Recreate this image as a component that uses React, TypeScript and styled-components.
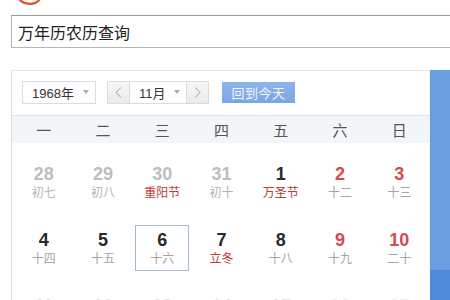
import React from 'react'
import styled, { createGlobalStyle } from 'styled-components'

const FONT = '"Liberation Sans", Arial, "Noto Sans CJK SC", sans-serif'
const RED = '#d9484c'
const FEST_RED = '#c0393b'

const GlobalStyle = createGlobalStyle`
  html, body {
    margin: 0;
    padding: 0;
    background: #fff;
    overflow: hidden;
  }
  body {
    font-family: ${FONT};
    color: #333;
  }
`

const Page = styled.div`
  width: 450px;
  height: 300px;
  overflow: hidden;
  padding-left: 11px;
  box-sizing: border-box;
`

const LogoBar = styled.div`
  height: 15px;
  padding-left: 4px;
  overflow: hidden;
`

const SearchBox = styled.div`
  width: 470px;
  height: 33px;
  box-sizing: border-box;
  border: 1px solid #b4b4b4;
  border-top-color: #999;
  display: flex;
  align-items: center;
  padding-left: 6px;
  font-size: 16px;
  color: #222;
`

const Body = styled.div`
  display: flex;
  margin-top: 22px;
  height: 240px;
`

const Card = styled.div`
  width: 419px;
  flex: none;
  border-left: 1px solid #dcdcdc;
  border-top: 1px solid #e6e6e6;
  box-sizing: border-box;
`

const SidePanel = styled.div`
  flex: none;
  width: 40px;
  display: flex;
  flex-direction: column;
`

const SideTop = styled.div`
  height: 200px;
  background: #6b9de1;
`

const SideBottom = styled.div`
  flex: 1;
  background: #5089d9;
`

const Toolbar = styled.div`
  display: flex;
  align-items: center;
  height: 45px;
  padding: 0 0 2px 10px;
  box-sizing: border-box;
  border-bottom: 1px solid #e3e3e3;
`

const Select = styled.div<{ $w: number }>`
  width: ${(p) => p.$w}px;
  height: 23px;
  box-sizing: border-box;
  border: 1px solid #dcdcdc;
  background: #fff;
  display: flex;
  align-items: center;
  justify-content: space-between;
  padding: 0 6px 0 9px;
  font-size: 13px;
  color: #333;
`

const Caret = styled.span`
  width: 0;
  height: 0;
  border-left: 3.5px solid transparent;
  border-right: 3.5px solid transparent;
  border-top: 4px solid #aaa;
`

const MonthGroup = styled.div`
  display: flex;
  margin-left: 11px;
`

const ArrowBtn = styled.div<{ $side: 'l' | 'r' }>`
  width: 22px;
  height: 23px;
  box-sizing: border-box;
  border: 1px solid #dcdcdc;
  ${(p) => (p.$side === 'l' ? 'border-right: none;' : 'border-left: none;')}
  background: linear-gradient(#f7f7f7, #ebebeb);
  display: flex;
  align-items: center;
  justify-content: center;
`

const TodayBtn = styled.div`
  margin-left: 13px;
  width: 73px;
  height: 21px;
  background: linear-gradient(#8fb5ec, #7aa6e6);
  color: #f4f8ff;
  font-size: 13px;
  display: flex;
  align-items: center;
  justify-content: center;
  letter-spacing: 0.5px;
`

const WeekHeader = styled.div`
  display: grid;
  grid-template-columns: repeat(7, 1fr);
  height: 27px;
  background: #f2f6fb;
  padding: 0 1px 0 2px;
  align-items: center;
`

const WeekLabel = styled.div`
  text-align: center;
  font-size: 15px;
  color: #555;
`

const Grid = styled.div`
  display: grid;
  grid-template-columns: repeat(7, 1fr);
  row-gap: 20px;
  padding: 16px 1px 0 2px;
  justify-items: center;
`

const Cell = styled.div<{ $selected?: boolean; $faded?: boolean }>`
  width: 54px;
  height: 46px;
  box-sizing: border-box;
  border: 1px solid ${(p) => (p.$selected ? '#a3bad2' : 'transparent')};
  display: flex;
  flex-direction: column;
  align-items: center;
  justify-content: center;
  opacity: ${(p) => (p.$faded ? 0.12 : 1)};
`

type Tone = 'prev' | 'normal' | 'weekend'

const DayNum = styled.div<{ $tone: Tone }>`
  font-size: 18px;
  font-weight: bold;
  line-height: 20px;
  color: ${(p) =>
    p.$tone === 'prev' ? '#bdbdbd' : p.$tone === 'weekend' ? RED : '#2a2a2a'};
`

const Lunar = styled.div<{ $fest?: boolean; $tone: Tone }>`
  font-size: 12px;
  line-height: 16px;
  font-family: "Noto Sans CJK SC", sans-serif;
  color: ${(p) => (p.$fest ? FEST_RED : p.$tone === 'prev' ? '#b3b3b3' : '#a6a6a6')};
`

type Day = { n: number; lunar: string; tone: Tone; fest?: boolean; selected?: boolean }

const weeks: Day[][] = [
  [
    { n: 28, lunar: '初七', tone: 'prev' },
    { n: 29, lunar: '初八', tone: 'prev' },
    { n: 30, lunar: '重阳节', tone: 'prev', fest: true },
    { n: 31, lunar: '初十', tone: 'prev' },
    { n: 1, lunar: '万圣节', tone: 'normal', fest: true },
    { n: 2, lunar: '十二', tone: 'weekend' },
    { n: 3, lunar: '十三', tone: 'weekend' },
  ],
  [
    { n: 4, lunar: '十四', tone: 'normal' },
    { n: 5, lunar: '十五', tone: 'normal' },
    { n: 6, lunar: '十六', tone: 'normal', selected: true },
    { n: 7, lunar: '立冬', tone: 'normal', fest: true },
    { n: 8, lunar: '十八', tone: 'normal' },
    { n: 9, lunar: '十九', tone: 'weekend' },
    { n: 10, lunar: '二十', tone: 'weekend' },
  ],
  [
    { n: 11, lunar: '廿一', tone: 'normal' },
    { n: 12, lunar: '廿二', tone: 'normal' },
    { n: 13, lunar: '廿三', tone: 'normal' },
    { n: 14, lunar: '廿四', tone: 'normal' },
    { n: 15, lunar: '廿五', tone: 'normal' },
    { n: 16, lunar: '廿六', tone: 'weekend' },
    { n: 17, lunar: '廿七', tone: 'weekend' },
  ],
]

const weekdays = ['一', '二', '三', '四', '五', '六', '日']

const Chevron = ({ dir }: { dir: 'l' | 'r' }) => (
  <svg width="7" height="11" viewBox="0 0 7 11">
    <path
      d={dir === 'l' ? 'M6 0.5 L1 5.5 L6 10.5' : 'M1 0.5 L6 5.5 L1 10.5'}
      fill="none"
      stroke="#999"
      strokeWidth="1"
    />
  </svg>
)

const Logo = () => (
  <svg width="40" height="15" viewBox="0 0 40 15">
    <path
      d="M2 -4 A 12 10 0 0 0 24 -1"
      fill="none"
      stroke="#e0522c"
      strokeWidth="2.2"
      transform="translate(1 0)"
    />
  </svg>
)

export default function App() {
  return (
    <Page>
      <GlobalStyle />
      <LogoBar>
        <Logo />
      </LogoBar>
      <SearchBox>万年历农历查询</SearchBox>
      <Body>
        <Card>
          <Toolbar>
            <Select $w={74}>
              <span>1968年</span>
              <Caret />
            </Select>
            <MonthGroup>
              <ArrowBtn $side="l">
                <Chevron dir="l" />
              </ArrowBtn>
              <Select $w={58}>
                <span>11月</span>
                <Caret />
              </Select>
              <ArrowBtn $side="r">
                <Chevron dir="r" />
              </ArrowBtn>
            </MonthGroup>
            <TodayBtn>回到今天</TodayBtn>
          </Toolbar>
          <WeekHeader>
            {weekdays.map((w) => (
              <WeekLabel key={w}>{w}</WeekLabel>
            ))}
          </WeekHeader>
          <Grid>
            {weeks.map((week, wi) =>
              week.map((d, i) => (
                <Cell key={`${wi}-${i}`} $selected={d.selected} $faded={wi === 2}>
                  <DayNum $tone={d.tone}>{d.n}</DayNum>
                  <Lunar $tone={d.tone} $fest={d.fest}>
                    {d.lunar}
                  </Lunar>
                </Cell>
              ))
            )}
          </Grid>
        </Card>
        <SidePanel>
          <SideTop />
          <SideBottom />
        </SidePanel>
      </Body>
    </Page>
  )
}
